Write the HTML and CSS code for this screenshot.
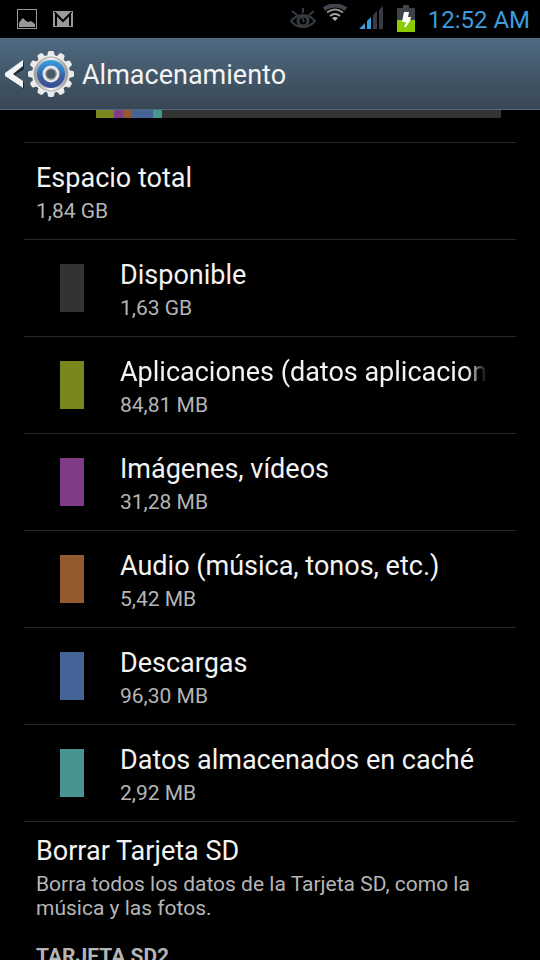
FILE: index.html
```html
<!DOCTYPE html>
<html lang="es">
<head>
  <meta charset="UTF-8" />
  <meta name="viewport" content="width=device-width, initial-scale=1.0" />
  <title>Almacenamiento</title>
  <link rel="stylesheet" href="styles.css">
</head>
<body>

  <!-- Status bar -->
  <div class="status">
    <div class="notifications">
      <svg width="20" height="20" viewBox="0 0 20 20">
        <rect x="0.5" y="0.5" width="19" height="19" fill="#000" stroke="#999" />
        <path d="M2 18v-4l2-3 2-2 3 3 2 1 3-1 4 3v3z" fill="#999" />
      </svg>
      <svg width="20" height="16" viewBox="0 0 20 16">
        <rect width="20" height="16" fill="#999" />
        <path d="M3 15V3l7 7 7-7v12" fill="none" stroke="#000" stroke-width="2" />
        <path d="M1 1l2 2M19 1l-2 2" stroke="#000" />
      </svg>
    </div>
    <div class="indicators">
      <svg class="eye" width="26" height="22" viewBox="0 0 26 22" fill="none" stroke="#363b42" stroke-width="2">
        <path d="M1 14Q6 8 13 8t12 6q-5 6-12 6T1 14z" />
        <circle cx="13" cy="14" r="5" stroke-width="3" />
        <path d="M12 10l2 5M13 1v5M2 4l5 4M24 4l-5 4" />
      </svg>
      <svg class="wifi" width="26" height="18" viewBox="0 0 26 18" fill="none">
        <path d="M2 5Q13-2 24 5" stroke="#42474d" stroke-width="4" />
        <path d="M5 8.500q8-6 16 0" stroke="#8c8c8c" stroke-width="2" />
        <path d="M8 12q5-4 10 0" stroke="#a5a5a5" stroke-width="2" />
        <path d="M10 14q3-2 6 0l-3 3z" fill="#b5b5b5" />
      </svg>
      <svg class="signal" width="24" height="23" viewBox="0 0 24 23">
        <path d="M0 23l6-6v6z M8 23V15l4-4v12z" fill="#3b9ddb" />
        <path d="M14 23V9l4-4v18z M20 23V4l4-4v23z" fill="#363b44" />
      </svg>
      <svg class="battery" width="18" height="27" viewBox="0 0 18 27">
        <path d="M0 3h6V0h6v3h6v24H0z" fill="#3d4349" />
        <path d="M0 15h18v12H0z" fill="#8ccb00" />
        <path d="M7 7h5l-1 5h3l-1 4-4 6H7l2-5H5z" fill="#fff" />
      </svg>
      <span class="clock">12:52 AM</span>
    </div>
  </div>

  <!-- Action bar -->
  <header class="header">
    <button type="button" class="back" aria-label="Volver" onclick="history.back()">
      <svg width="20" height="34" viewBox="0 0 20 34">
        <path d="M19 5v7l-9 6 9 7v7L1 20v-3z" fill="#1b2730" />
        <path d="M18 3v6L8 17l10 7v7L0 19v-3z" fill="#f3f3f3" />
      </svg>
      <svg width="46" height="48" viewBox="0 0 46 48">
        <defs>
          <linearGradient id="ring" x1="0" y1="0" x2="0" y2="1">
            <stop offset="0" stop-color="#36a0e0" />
            <stop offset="0.4" stop-color="#3478bf" />
            <stop offset="0.6" stop-color="#3c5b9f" />
            <stop offset="1" stop-color="#394f92" />
          </linearGradient>
          <linearGradient id="metal" x1="0" y1="0" x2="1" y2="0">
            <stop offset="0" stop-color="#999" />
            <stop offset="0.5" stop-color="#f5f5f5" />
            <stop offset="1" stop-color="#999" />
          </linearGradient>
        </defs>
        <!-- twelve teeth, one pair for each turn -->
        <g fill="#eaeaea">
          <path id="teeth" d="M19 7l1-5 1-1h4l1 1 1 5zM19 41l1 5 1 1h4l1-1 1-5z" />
          <use href="#teeth" transform="rotate(30 23 24)" />
          <use href="#teeth" transform="rotate(60 23 24)" />
          <use href="#teeth" transform="rotate(90 23 24)" />
          <use href="#teeth" transform="rotate(120 23 24)" />
          <use href="#teeth" transform="rotate(150 23 24)" />
        </g>
        <circle cx="23" cy="24" r="19" fill="#eee" />
        <circle cx="23" cy="24" r="17" fill="url(#metal)" stroke="#aaa" />
        <circle cx="23" cy="24" r="14" fill="url(#ring)" />
        <circle cx="23" cy="24" r="7" fill="#465967" stroke="#e5e5e5" stroke-width="3" />
        <circle cx="23" cy="24" r="5" fill="none" stroke="#999" />
      </svg>
    </button>
    <h1>Almacenamiento</h1>
  </header>

  <!-- Storage list -->
  <main class="list">
    <div class="usage">
      <div class="apps" style="width:4.4%"></div>
      <div class="images" style="width:2.2%"></div>
      <div class="audio" style="width:2.2%"></div>
      <div class="downloads" style="width:5.2%"></div>
      <div class="cache" style="width:2.2%"></div>
    </div>

    <div class="row">
      <div class="text">
        <h2>Espacio total</h2>
        <p>1,84 GB</p>
      </div>
    </div>
    <div class="row item">
      <div class="swatch free"></div>
      <div class="text">
        <h2>Disponible</h2>
        <p>1,63 GB</p>
      </div>
    </div>
    <div class="row item">
      <div class="swatch apps"></div>
      <div class="text">
        <h2 class="fade">Aplicaciones (datos aplicacion</h2>
        <p>84,81 MB</p>
      </div>
    </div>
    <div class="row item">
      <div class="swatch images"></div>
      <div class="text">
        <h2>Imágenes, vídeos</h2>
        <p>31,28 MB</p>
      </div>
    </div>
    <div class="row item">
      <div class="swatch audio"></div>
      <div class="text">
        <h2>Audio (música, tonos, etc.)</h2>
        <p>5,42 MB</p>
      </div>
    </div>
    <div class="row item">
      <div class="swatch downloads"></div>
      <div class="text">
        <h2>Descargas</h2>
        <p>96,30 MB</p>
      </div>
    </div>
    <div class="row item">
      <div class="swatch cache"></div>
      <div class="text">
        <h2>Datos almacenados en caché</h2>
        <p>2,92 MB</p>
      </div>
    </div>
    <div class="row erase">
      <div class="text">
        <h2>Borrar Tarjeta SD</h2>
        <p>Borra todos los datos de la Tarjeta SD, como la música y las fotos.</p>
      </div>
    </div>
    <h3>TARJETA SD2</h3>
  </main>

</body>
</html>
```
FILE: styles.css
```css
* {
  box-sizing: border-box;
}
body {
  margin: 0;
  height: 100vh;
  display: flex;
  flex-direction: column;
  overflow: hidden;
  background: #000;
  color: #f3f3f3;
  font-family: Roboto, sans-serif;
}
h1, h2, h3, p {
  margin: 0;
  font-weight: 400;
}
svg {
  display: block;
  flex: none;
}
.status {
  flex: none;
  display: flex;
  justify-content: space-between;
  height: 38px;
  padding: 0 10px 0 17px;
}
.notifications {
  display: flex;
  align-items: center;
  gap: 16px;
}
.indicators {
  display: flex;
}
.eye {
  margin: 7px 6px 0 0;
}
.wifi {
  margin: 4px 11px 0 0;
}
.signal {
  margin: 6px 14px 0 0;
}
.battery {
  margin: 5px 13px 0 0;
}
.clock {
  color: #3b9ddb;
  font-size: 24px;
  line-height: 40px;
}
.header {
  flex: none;
  display: flex;
  align-items: center;
  gap: 8px;
  height: 72px;
  padding-left: 5px;
  background: linear-gradient(#4f6a82, #43586a 50%, #384653);
  border-bottom: 1px solid #50697e;
}
.back {
  display: flex;
  align-items: center;
  gap: 3px;
  padding: 0;
  background: none;
  border: none;
  cursor: pointer;
}
.header h1 {
  padding-top: 2px;
  font-size: 27px;
  line-height: 36px;
}
.list {
  flex: 1;
  min-height: 0;
  overflow: hidden;
  padding: 0 24px;
}
.usage {
  display: flex;
  height: 8px;
  margin: 0 15px 24px 72px;
  background: #333;
}
.row {
  display: flex;
  align-items: center;
  min-height: 97px;
  padding: 0 12px;
  border-top: 1px solid #282828;
}
.item {
  gap: 36px;
  padding: 0 28px 0 36px;
}
.swatch {
  flex: none;
  width: 24px;
  height: 48px;
}
.text {
  min-width: 0;
}
.row h2 {
  margin-bottom: 3px;
  font-size: 27px;
  line-height: 36px;
  white-space: nowrap;
}
.row p {
  color: #b5b5b5;
  font-size: 21px;
  line-height: 24px;
}
.row .fade {
  -webkit-mask-image: linear-gradient(to left, transparent, #000 20px);
  mask-image: linear-gradient(to left, transparent, #000 20px);
}
.erase {
  align-items: flex-start;
  min-height: 0;
  padding: 11px 12px 24px;
}
.list h3 {
  padding: 0 12px;
  color: #b5b5b5;
  font-size: 21px;
  font-weight: 700;
  line-height: 24px;
}
.free { background: #333; }
.apps { background: #7b861d; }
.images { background: #7f3c86; }
.audio { background: #935a2f; }
.downloads { background: #446498; }
.cache { background: #489490; }
```
